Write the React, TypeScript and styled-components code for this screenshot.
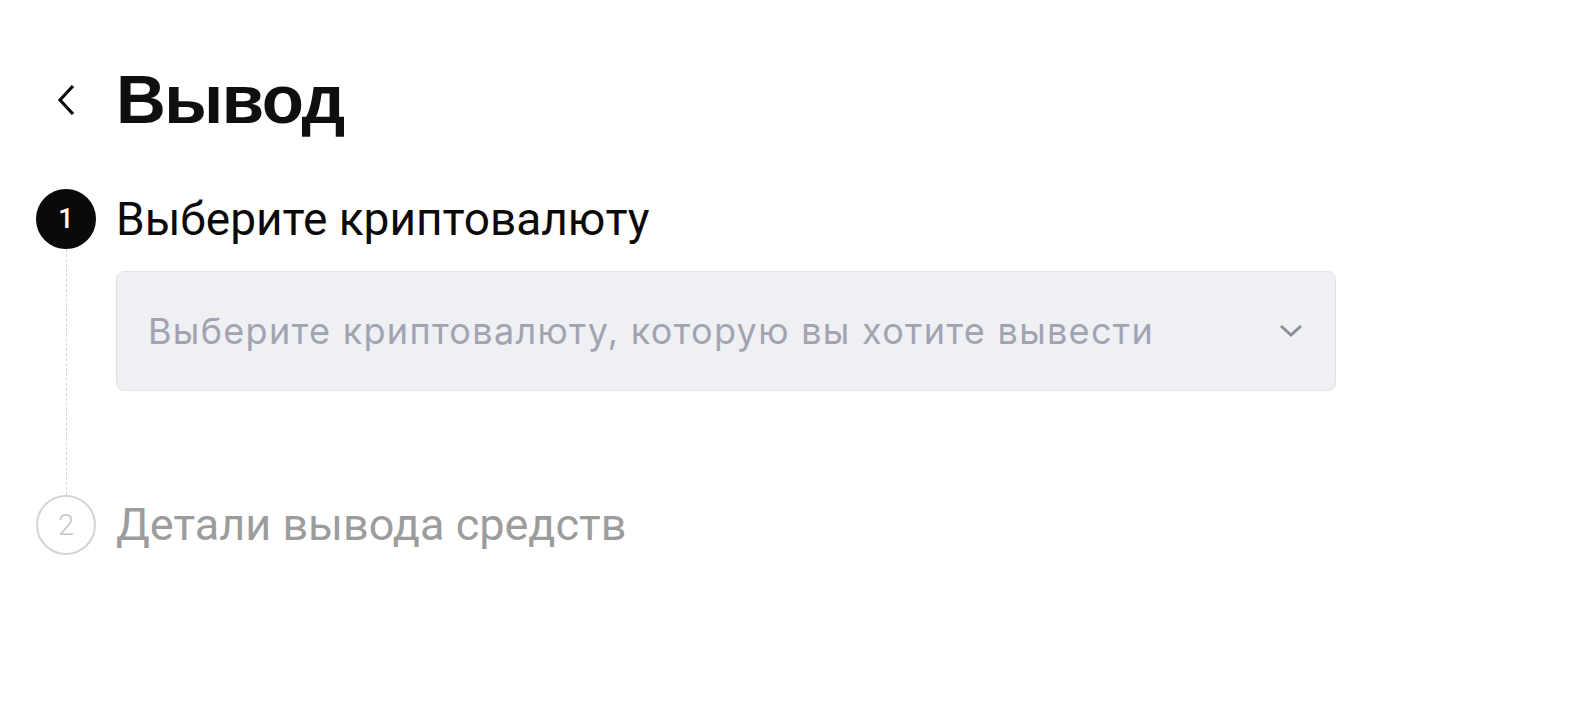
import React from "react";
import styled, { createGlobalStyle } from "styled-components";

const GlobalStyle = createGlobalStyle`
    body {
        margin: 0;
        background: #ffffff;
        font-family: Roboto, "Liberation Sans", sans-serif;
    }
`
const Page = styled.main`
    padding: 50px 36px 0 36px;
`
const Header = styled.header`
    display: grid;
    grid-template-columns: 60px 1fr;
    column-gap: 20px;
    align-items: center;
    height: 100px;
    margin-bottom: 39px;
`
const BackButton = styled.button`
    display: flex;
    align-items: center;
    justify-content: center;
    background: none;
    border: none;
    padding: 0;
    cursor: pointer;
    color: #0b0b0b;
`
const Title = styled.h1`
    margin: 0;
    font-family: "Liberation Sans", Arial, sans-serif;
    font-size: 69px;
    line-height: 100px;
    font-weight: bold;
    color: #0f0f0f;
    letter-spacing: -1.5px;
`
const Step = styled.section`
    display: grid;
    grid-template-columns: 60px 1fr;
    column-gap: 20px;
`
const Rail = styled.div`
    display: flex;
    flex-direction: column;
    align-items: center;
`
const Circle = styled.div<{ $active?: boolean }>`
    box-sizing: border-box;
    width: 60px;
    height: 60px;
    border-radius: 50%;
    display: flex;
    align-items: center;
    justify-content: center;
    background: ${p => (p.$active ? "#0a0a0a" : "#ffffff")};
    border: 2px solid ${p => (p.$active ? "#0a0a0a" : "#d4d4d4")};
    color: ${p => (p.$active ? "#ffffff" : "#c4c4c4")};
    font-size: ${p => (p.$active ? "27px" : "29px")};
    font-weight: ${p => (p.$active ? 500 : 300)};
`
const Connector = styled.div`
    flex: 1;
    width: 0;
    border-left: 1px dashed #d6d6d6;
`
const StepBody = styled.div<{ $last?: boolean }>`
    padding-bottom: ${p => (p.$last ? "0" : "104px")};
`
const StepTitle = styled.h2<{ $muted?: boolean }>`
    margin: 0;
    font-size: ${p => (p.$muted ? "45px" : "46px")};
    line-height: 60px;
    font-weight: 400;
    color: ${p => (p.$muted ? "#9c9c9c" : "#0a0a0a")};
`
const Select = styled.div`
    box-sizing: border-box;
    margin-top: 22px;
    width: 1220px;
    height: 120px;
    display: flex;
    align-items: center;
    justify-content: space-between;
    padding: 0 32px 0 31px;
    background: #eff0f4;
    border: 1px solid #e2e3e8;
    border-radius: 8px;
`
const Placeholder = styled.span`
    font-family: Inter, "Noto Sans", sans-serif;
    font-size: 36px;
    letter-spacing: 1.3px;
    color: #a1a4b0;
`

const App: React.FC = () => {
  return (
    <Page>
      <GlobalStyle />
      <Header>
        <BackButton aria-label="Назад">
          <svg width="20" height="32" viewBox="0 0 20 32" fill="none">
            <path d="M17 2 L4 16 L17 30" stroke="currentColor" strokeWidth="3.2" />
          </svg>
        </BackButton>
        <Title>Вывод</Title>
      </Header>

      <Step>
        <Rail>
          <Circle $active>1</Circle>
          <Connector />
        </Rail>
        <StepBody>
          <StepTitle>Выберите криптовалюту</StepTitle>
          <Select>
            <Placeholder>Выберите криптовалюту, которую вы хотите вывести</Placeholder>
            <svg width="24" height="14" viewBox="0 0 24 14" fill="none">
              <path d="M2 2 L12 11 L22 2" stroke="#8c8f99" strokeWidth="3" />
            </svg>
          </Select>
        </StepBody>
      </Step>

      <Step>
        <Rail>
          <Circle>2</Circle>
        </Rail>
        <StepBody $last>
          <StepTitle $muted>Детали вывода средств</StepTitle>
        </StepBody>
      </Step>
    </Page>
  );
};

export default App;
